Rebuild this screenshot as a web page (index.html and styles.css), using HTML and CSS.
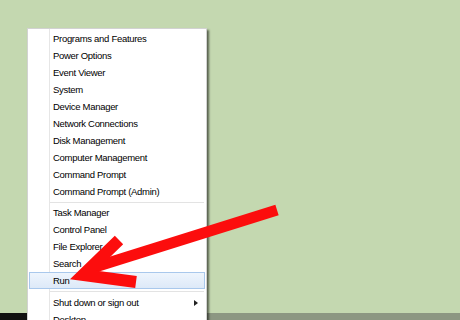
FILE: index.html
```html
<!DOCTYPE html>
<html>
	<head>
		<meta charset="utf-8" />
		<title>Quick Link menu</title>
		<link rel="stylesheet" href="styles.css">
	</head>
	<body>
		<div class="desktop">
			<ul class="menu">
				<li class="menu-item">Programs and Features</li>
				<li class="menu-item">Power Options</li>
				<li class="menu-item">Event Viewer</li>
				<li class="menu-item">System</li>
				<li class="menu-item">Device Manager</li>
				<li class="menu-item">Network Connections</li>
				<li class="menu-item">Disk Management</li>
				<li class="menu-item">Computer Management</li>
				<li class="menu-item">Command Prompt</li>
				<li class="menu-item">Command Prompt (Admin)</li>
				<li class="menu-sep"></li>
				<li class="menu-item">Task Manager</li>
				<li class="menu-item">Control Panel</li>
				<li class="menu-item">File Explorer</li>
				<li class="menu-item">Search</li>
				<li class="menu-item active">Run</li>
				<li class="menu-sep menu-sep-lg"></li>
				<li class="menu-item has-sub">Shut down or sign out</li>
				<li class="menu-item">Desktop</li>
			</ul>
			<div class="taskbar"></div>
			<!--红色箭头-->
			<svg class="arrow" width="460" height="320" viewBox="0 0 460 320">
				<line x1="92" y1="268" x2="277" y2="210" stroke="#fc0d0d" stroke-width="11" />
				<polyline points="119,240 83,275 136,282" fill="none" stroke="#fc0d0d" stroke-width="12" stroke-linejoin="miter" stroke-miterlimit="10" />
			</svg>
		</div>
	</body>
</html>
```

FILE: styles.css
```css
/*初始化样式*/

* {
	padding: 0;
	margin: 0;
	box-sizing: border-box;
}

body {
	width: 460px;
	height: 320px;
	overflow: hidden;
	font-family: "Liberation Sans", Arial, sans-serif;
}

/*桌面*/

.desktop {
	position: relative;
	width: 460px;
	height: 320px;
	overflow: hidden;
	background: #c4d8b0;
	padding: 28px 0 0 27px;
}

.taskbar {
	position: absolute;
	left: 0;
	right: 0;
	bottom: 0;
	height: 7px;
	background: linear-gradient(to right, #111 0 27px, #8c9782 27px);
}

/*菜单*/

.menu {
	position: relative;
	z-index: 2;
	list-style: none;
	width: 180px;
	padding-top: 1px;
	background: #fff linear-gradient(to right, transparent 21px, #e6e6e6 21px, #e6e6e6 22px, transparent 22px);
	border: 1px solid #d2d2d2;
	box-shadow: 2px 2px 2px rgba(0, 0, 0, .55);
}

.menu-item {
	position: relative;
	height: 17px;
	line-height: 17px;
	margin: 0 1px;
	padding-left: 24px;
	font-size: 9.5px;
	letter-spacing: -0.3px;
	color: #000;
	white-space: nowrap;
}

.menu-item.active {
	background: linear-gradient(#eef5fd, #dde9f8);
	border: 1px solid #a9c8ec;
	line-height: 15px;
	padding-left: 23px;
}

.has-sub::after {
	content: "";
	position: absolute;
	right: 7px;
	top: 6px;
	border-left: 4px solid #222;
	border-top: 3px solid transparent;
	border-bottom: 3px solid transparent;
}

.menu-sep {
	height: 4px;
	margin-left: 22px;
	margin-right: 2px;
	background: linear-gradient(transparent 2px, #e3e3e3 2px, #e3e3e3 3px, transparent 3px);
}

.menu-sep-lg {
	height: 5px;
}

/*箭头*/

.arrow {
	position: absolute;
	top: 0;
	left: 0;
	z-index: 3;
}
```
